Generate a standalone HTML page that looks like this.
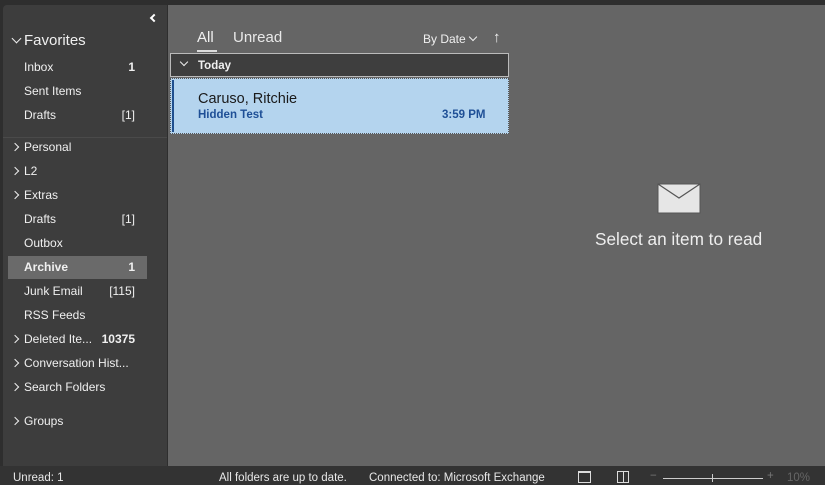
<!DOCTYPE html><html><head><style>
*{margin:0;padding:0;box-sizing:border-box}
body{width:825px;height:485px;background:#2e2e2e;font-family:"Liberation Sans",sans-serif;position:relative;overflow:hidden;color:#fff}
.side{position:absolute;left:3px;top:5px;width:164px;height:461px;background:#3d3d3d;border-radius:4px 0 0 0}
.main{position:absolute;left:168px;top:5px;width:657px;height:461px;background:#656565}
.t{position:absolute;font-size:12px;color:#f0f0f0;white-space:nowrap}
.c{position:absolute;font-size:12px;color:#f0f0f0;text-align:right}
.ch{position:absolute;width:6px;height:6px;border-right:1.5px solid #eee;border-bottom:1.5px solid #eee;transform:rotate(-45deg)}
.status{position:absolute;left:0;top:466px;width:825px;height:19px;background:#333;font-size:11.5px;color:#e8e8e8}
</style></head><body>
<div class="side"></div>
<div class="main"></div>
<div style="position:absolute;left:151px;top:15px;width:6px;height:6px;border-left:2px solid #fff;border-bottom:2px solid #fff;transform:rotate(45deg)"></div>
<div style="position:absolute;left:13px;top:35px;width:7px;height:7px;border-right:1.5px solid #eee;border-bottom:1.5px solid #eee;transform:rotate(45deg)"></div>
<div class="t" style="left:24px;top:32px;font-size:15px">Favorites</div>
<div class="t" style="left:24px;top:60px">Inbox</div><div class="c" style="left:100px;top:60px;width:35px;font-weight:bold">1</div>
<div class="t" style="left:24px;top:84px">Sent Items</div>
<div class="t" style="left:24px;top:108px">Drafts</div><div class="c" style="left:100px;top:108px;width:35px">[1]</div>
<div style="position:absolute;left:3px;top:137px;width:164px;height:1px;background:#4a4a4a"></div>
<div class="ch" style="left:12px;top:144px"></div><div class="t" style="left:24px;top:140px">Personal</div>
<div class="ch" style="left:12px;top:168px"></div><div class="t" style="left:24px;top:164px">L2</div>
<div class="ch" style="left:12px;top:192px"></div><div class="t" style="left:24px;top:188px">Extras</div>
<div class="t" style="left:24px;top:212px">Drafts</div><div class="c" style="left:100px;top:212px;width:35px">[1]</div>
<div class="t" style="left:24px;top:236px">Outbox</div>
<div style="position:absolute;left:8px;top:256px;width:139px;height:23px;background:#6a6a6a"></div>
<div class="t" style="left:24px;top:260px;font-weight:bold">Archive</div><div class="c" style="left:100px;top:260px;width:35px;font-weight:bold">1</div>
<div class="t" style="left:24px;top:284px">Junk Email</div><div class="c" style="left:100px;top:284px;width:35px">[115]</div>
<div class="t" style="left:24px;top:308px">RSS Feeds</div>
<div class="ch" style="left:12px;top:336px"></div><div class="t" style="left:24px;top:332px">Deleted Ite...</div><div class="c" style="left:90px;top:332px;width:45px;font-weight:bold">10375</div>
<div class="ch" style="left:12px;top:360px"></div><div class="t" style="left:24px;top:356px">Conversation Hist...</div>
<div class="ch" style="left:12px;top:384px"></div><div class="t" style="left:24px;top:380px">Search Folders</div>
<div class="ch" style="left:12px;top:418px"></div><div class="t" style="left:24px;top:414px">Groups</div>

<div class="t" style="left:197px;top:29px;font-size:15px">All</div>
<div style="position:absolute;left:197px;top:50px;width:20px;height:2px;background:#ddd"></div>
<div class="t" style="left:233px;top:29px;font-size:15px;color:#e8e8e8">Unread</div>
<div class="t" style="left:423px;top:32px;font-size:12px">By Date</div>
<div style="position:absolute;left:470px;top:34px;width:6px;height:6px;border-right:1.5px solid #eee;border-bottom:1.5px solid #eee;transform:rotate(45deg)"></div>
<div class="t" style="left:493px;top:29px;font-size:15px">↑</div>
<div style="position:absolute;left:170px;top:53px;width:339px;height:24px;background:#3e3e3e;border:1px solid #bbb"></div>
<div style="position:absolute;left:181px;top:59px;width:6px;height:6px;border-right:1.5px solid #eee;border-bottom:1.5px solid #eee;transform:rotate(45deg)"></div>
<div class="t" style="left:198px;top:60px;font-size:11.5px;font-weight:bold">Today</div>
<div style="position:absolute;left:170px;top:78px;width:339px;height:56px;background:#b4d4ee;border:1px dotted #555"></div>
<div style="position:absolute;left:172px;top:80px;width:2px;height:52px;background:#1f4f8f"></div>
<div class="t" style="left:198px;top:91px;font-size:14.5px;color:#1a1a1a">Caruso, Ritchie</div>
<div class="t" style="left:198px;top:109px;font-size:11.5px;color:#1e4f96;font-weight:bold">Hidden Test</div>
<div class="t" style="left:442px;top:109px;font-size:11.5px;color:#1e4f96;font-weight:bold">3:59 PM</div>

<svg style="position:absolute;left:657px;top:183px" width="44" height="31"><rect x="1" y="1" width="42" height="29" fill="#e6e6e6" stroke="#555" stroke-width="1"/><path d="M1 1 L22 15 L43 1" fill="none" stroke="#555" stroke-width="1.2"/></svg>
<div class="t" style="left:595px;top:229px;font-size:17.2px;color:#eee">Select an item to read</div>

<div class="status">
<span style="position:absolute;left:13px;top:6px">Unread: 1</span>
<span style="position:absolute;left:219px;top:6px">All folders are up to date.</span>
<span style="position:absolute;left:369px;top:6px">Connected to: Microsoft Exchange</span>
<div style="position:absolute;left:578px;top:5px;width:13px;height:12px;border:1px solid #ddd;border-top-width:2px"></div>
<div style="position:absolute;left:617px;top:5px;width:12px;height:12px;border:1px solid #ddd"><div style="position:absolute;left:5px;top:0;width:1px;height:10px;background:#ddd"></div></div>
<span style="position:absolute;left:650px;top:4px;color:#777">−</span>
<div style="position:absolute;left:663px;top:12px;width:100px;height:1px;background:#ccc"></div>
<div style="position:absolute;left:712px;top:8px;width:1px;height:8px;background:#ccc"></div>
<span style="position:absolute;left:767px;top:4px;color:#777">+</span>
<span style="position:absolute;left:787px;top:6px;color:#666">10%</span>
</div>
</body></html>
